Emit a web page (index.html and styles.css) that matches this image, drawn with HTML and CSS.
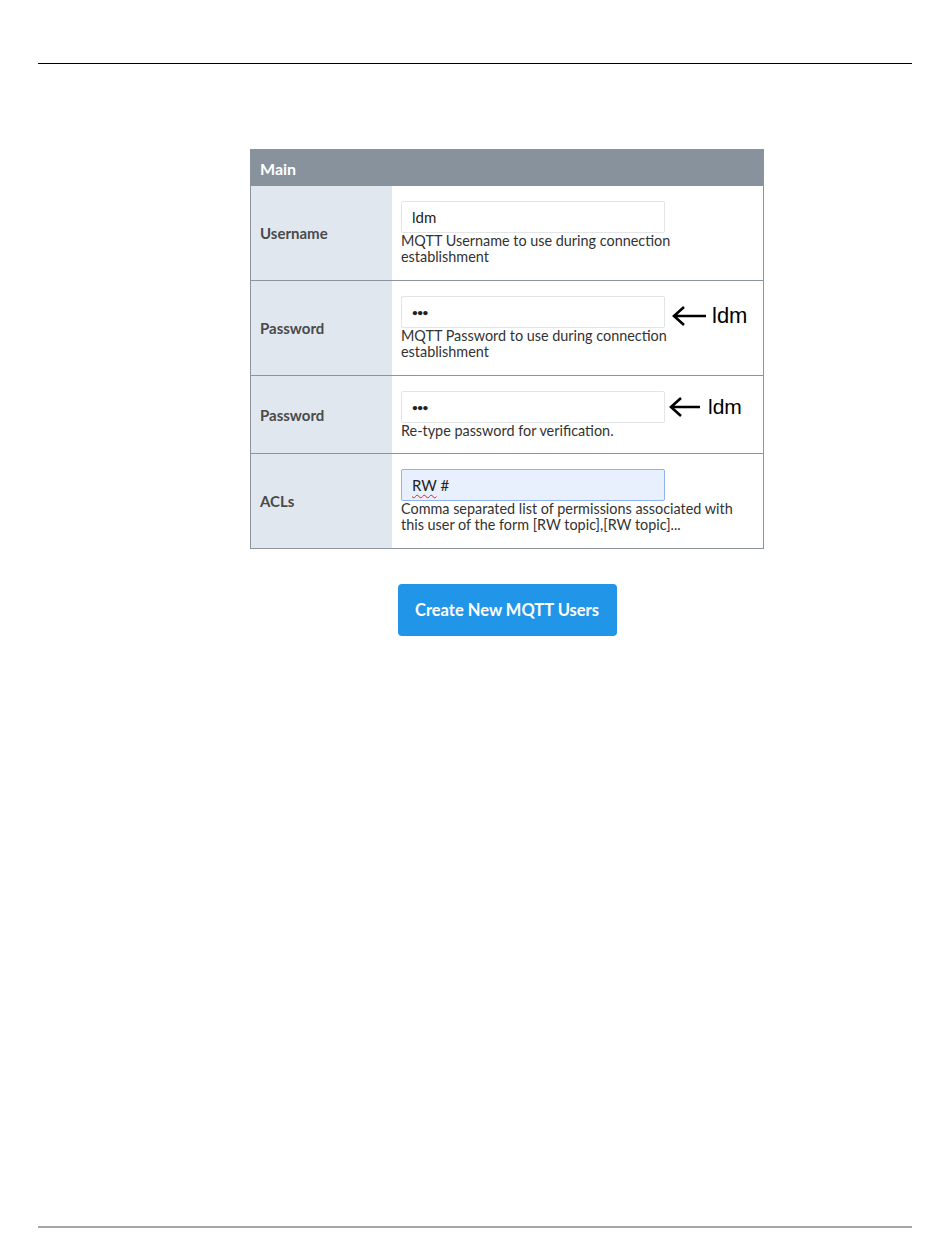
FILE: index.html
```html
<!DOCTYPE html>
<html lang="en">
<head>
    <meta charset="UTF-8">
    <title>MQTT Users</title>
    <link rel="stylesheet" href="styles.css">
</head>
<body>
<div class="page">
    <div class="rule-top"></div>
    <div class="figure">
        <div class="panel">
            <div class="panel-head">Main</div>
            <div class="row">
                <div class="label">Username</div>
                <div class="cell">
                    <div class="line">
                        <div class="field">ldm</div>
                    </div>
                    <div class="help">MQTT Username to use during connection<br>establishment</div>
                </div>
            </div>
            <div class="row">
                <div class="label">Password</div>
                <div class="cell">
                    <div class="line">
                        <div class="field dots">&bull;&bull;&bull;</div>
                        <div class="note low">
                            <svg class="arrow" width="36" height="22" viewBox="0 0 36 22"><path d="M35 11H3M13 2L3 11L13 20" fill="none" stroke="#000" stroke-width="2.6"/></svg>
                            ldm
                        </div>
                    </div>
                    <div class="help">MQTT Password to use during connection<br>establishment</div>
                </div>
            </div>
            <div class="row short">
                <div class="label">Password</div>
                <div class="cell">
                    <div class="line">
                        <div class="field dots">&bull;&bull;&bull;</div>
                        <div class="note small">
                            <svg class="arrow" width="33" height="22" viewBox="0 0 33 22"><path d="M32 11H3M13 2L3 11L13 20" fill="none" stroke="#000" stroke-width="2.6"/></svg>
                            ldm
                        </div>
                    </div>
                    <div class="help">Re-type password for verification.</div>
                </div>
            </div>
            <div class="row last">
                <div class="label">ACLs</div>
                <div class="cell">
                    <div class="line">
                        <div class="field focus"><span class="typo">RW</span> #</div>
                    </div>
                    <div class="help">Comma separated list of permissions associated with<br>this user of the form [RW topic],[RW topic]...</div>
                </div>
            </div>
        </div>
        <button class="create">Create New MQTT Users</button>
    </div>
    <div class="rule-bottom"></div>
</div>
</body>
</html>
```

FILE: styles.css
```css
* {
    box-sizing: border-box;
}
html, body {
    margin: 0;
    padding: 0;
}
body {
    background-color: #ffffff;
    font-family: Lato, "Open Sans", sans-serif;
    color: #333333;
}
.page {
    height: 1260px;
    display: flex;
    flex-direction: column;
    padding-top: 63px;
}
.rule-top {
    height: 1px;
    margin: 0 38px;
    background-color: #000000;
}
.figure {
    flex: 1;
    display: flex;
    flex-direction: column;
    align-items: center;
    padding-top: 85px;
    padding-left: 64px;
}
.panel {
    width: 514px;
    border: 1px solid #8c959e;
}
.panel-head {
    height: 36px;
    background-color: #87929c;
    color: #ffffff;
    font-weight: bold;
    font-size: 16px;
    padding: 9px 0 0 9px;
}
.row {
    display: flex;
    border-bottom: 1px solid #8c959e;
}
.row.last {
    border-bottom: none;
}
.label {
    width: 141px;
    background-color: #e1e7ee;
    display: flex;
    align-items: center;
    padding-left: 9px;
    font-weight: bold;
    font-size: 15px;
    color: #4a4a4a;
}
.cell {
    flex: 1;
    padding: 15px 0 15px 9px;
}
.row.short .cell {
    padding-bottom: 14px;
}
.line {
    display: flex;
    align-items: center;
}
.field {
    width: 264px;
    height: 32px;
    border: 1px solid #e2e4e6;
    border-radius: 2px;
    background-color: #ffffff;
    padding: 6px 0 0 10px;
    font-size: 15px;
    color: #222222;
}
.field.dots {
    font-size: 10px;
    font-weight: bold;
    letter-spacing: -0.5px;
    padding-top: 9px;
}
.field.focus {
    background-color: #e8f0fe;
    border-color: #8db3f0;
}
.typo {
    text-decoration: underline wavy #e02020;
    text-decoration-thickness: 1px;
    text-underline-offset: 3px;
}
.note {
    margin-left: 6px;
    font-family: "Liberation Sans", Arial, sans-serif;
    font-size: 22px;
    color: #000000;
    display: flex;
    align-items: center;
    gap: 5px;
}
.note.low {
    margin-top: 4px;
    margin-bottom: -4px;
}
.note.small {
    margin-left: 3px;
    font-size: 21px;
    gap: 7px;
}
.arrow {
    display: block;
}
.help {
    font-size: 14.4px;
    line-height: 16px;
    color: #333333;
}
.create {
    margin-top: 35px;
    width: 219px;
    height: 52px;
    border: none;
    border-radius: 4px;
    background-color: #2196e8;
    color: #ffffff;
    font-family: Lato, "Open Sans", sans-serif;
    font-weight: bold;
    font-size: 16.5px;
}
.rule-bottom {
    height: 2px;
    margin: 0 38px 32px;
    background-color: #a6a6a6;
}
```
